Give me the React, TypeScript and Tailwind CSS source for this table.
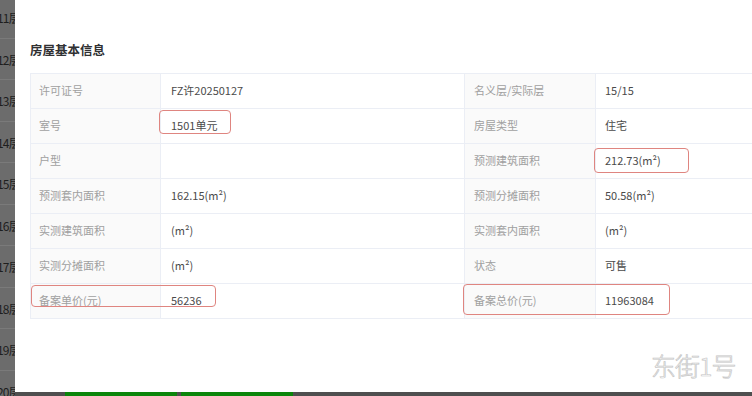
import React from "react";

const rows: [string, string, string, string][] = [
  ["许可证号", "FZ许20250127", "名义层/实际层", "15/15"],
  ["室号", "1501单元", "房屋类型", "住宅"],
  ["户型", "", "预测建筑面积", "212.73(m²)"],
  ["预测套内面积", "162.15(m²)", "预测分摊面积", "50.58(m²)"],
  ["实测建筑面积", "(m²)", "实测套内面积", "(m²)"],
  ["实测分摊面积", "(m²)", "状态", "可售"],
  ["备案单价(元)", "56236", "备案总价(元)", "11963084"],
];

const floors = ["11层", "12层", "13层", "14层", "15层", "16层", "17层", "18层", "19层", "20层"];

export default function App() {
  return (
    <div
      className="relative w-[752px] h-[396px] overflow-hidden bg-[#6c6c6c]"
      style={{ fontFamily: '"Noto Sans CJK SC", "Noto Sans", sans-serif' }}
    >
      {/* background page (dimmed) */}
      <div className="flex h-full">
        <div className="w-[15px] flex flex-col mt-[-3px]">
          {floors.map((f) => (
            <div
              key={f}
              className="h-[41.5px] shrink-0 flex items-center border-b border-[#7a7a7a] text-[12px] text-[#1e1e1e] whitespace-nowrap ml-[-3px] pt-[2px] tracking-[-0.8px]"
            >
              {f}
            </div>
          ))}
        </div>
        <div className="flex-1 flex flex-col justify-end">
          <div className="h-[4px] bg-[#4f4f4f] flex gap-[4px] pl-[50px]">
            <div className="w-[112px] h-full bg-[#0b850b]" />
            <div className="w-[112px] h-full bg-[#0b850b]" />
          </div>
        </div>
      </div>

      {/* dialog */}
      <div className="absolute left-[15px] top-0 right-0 h-[392px] bg-white overflow-hidden">
        <div className="pl-[15px] pt-[41px]">
          <div className="text-[12.5px] font-bold text-[#303133] leading-[18px]">房屋基本信息</div>
          <div className="mt-[14px] w-[760px] border-t border-l border-[#ebeef5]">
            {rows.map((r, i) => (
              <div key={i} className="flex h-[35px] border-b border-[#ebeef5] text-[11px] leading-none">
                <div className="w-[130px] shrink-0 bg-[#fafafa] border-r border-[#ebeef5] flex items-center pl-[8px] pb-[1px] text-[#a0a0a0]">
                  {r[0]}
                </div>
                <div className="w-[304px] shrink-0 border-r border-[#ebeef5] flex items-center pl-[10px] pb-[1px] text-[#4a4a4a]">
                  {r[1]}
                </div>
                <div className="w-[131px] shrink-0 bg-[#fafafa] border-r border-[#ebeef5] flex items-center pl-[9px] pb-[1px] text-[#a0a0a0]">
                  {r[2]}
                </div>
                <div className="flex-1 flex items-center pl-[9px] pb-[1px] text-[#4a4a4a]">{r[3]}</div>
              </div>
            ))}
          </div>
        </div>

        {/* annotation boxes */}
        <div className="absolute left-[144px] top-[110px] w-[72px] h-[24px] border-[1.5px] border-[#df8580] rounded-[4px]" />
        <div className="absolute left-[579px] top-[148px] w-[95px] h-[25px] border-[1.5px] border-[#df8580] rounded-[4px]" />
        <div className="absolute left-[16px] top-[285px] w-[185px] h-[22px] border-[1.5px] border-[#df8580] rounded-[4px]" />
        <div className="absolute left-[448px] top-[284px] w-[207px] h-[31px] border-[1.5px] border-[#df8580] rounded-[4px]" />

        {/* watermark */}
        <div className="absolute left-[636px] top-[353px] text-[25px] leading-none text-white tracking-[-1px] font-light [-webkit-text-stroke:0.7px_#c4c4c4]">
          东街1号
        </div>
      </div>
    </div>
  );
}
